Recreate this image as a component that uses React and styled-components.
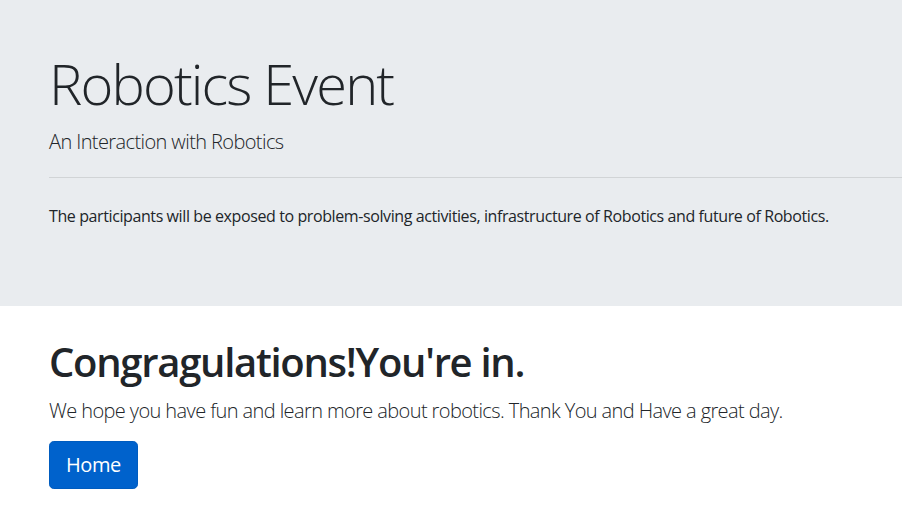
import React from "react";
import styled, { createGlobalStyle } from "styled-components";

const GlobalStyle = createGlobalStyle`
  body {
    margin: 0;
    font-family: "Open Sans", "Liberation Sans", sans-serif;
    color: #212529;
    background: #fff;
  }
`;

export default function App() {
  return (
    <>
      <GlobalStyle />
      <Jumbotron>
        <Display>Robotics Event</Display>
        <Lead $after={0}>An Interaction with Robotics</Lead>
        <Rule />
        <Text>
          The participants will be exposed to problem-solving activities,
          infrastructure of Robotics and future of Robotics.
        </Text>
      </Jumbotron>
      <Section>
        <Heading>Congragulations!You're in.</Heading>
        <Lead $after={15}>
          We hope you have fun and learn more about robotics. Thank You and
          Have a great day.
        </Lead>
        <HomeButton>Home</HomeButton>
      </Section>
    </>
  );
}

const Jumbotron = styled.div`
  background-color: #e9ecef;
  padding: 50px 0 62px 49px;
  margin-bottom: 32px;
`;

const Display = styled.h1`
  margin: 0 0 10px;
  font-size: 56px;
  font-weight: 300;
  line-height: 1.2;
  letter-spacing: -0.033em;
`;

const Lead = styled.p`
  margin: 0 0 ${(p) => p.$after}px;
  font-size: 20px;
  font-weight: 300;
  line-height: 1.5;
  letter-spacing: -0.03em;
`;

const Rule = styled.hr`
  margin: 20px 0 26px;
  border: 0;
  border-top: 1px solid rgba(0, 0, 0, 0.1);
`;

const Text = styled.p`
  margin: 0 0 16px;
  font-size: 16px;
  line-height: 1.5;
  letter-spacing: -0.025em;
`;

const Section = styled.div`
  padding: 0 49px;
`;

const Heading = styled.h1`
  margin: 0 0 10px;
  font-size: 40px;
  font-weight: 600;
  line-height: 1.2;
  letter-spacing: -0.032em;
`;

const HomeButton = styled.button`
  display: inline-block;
  padding: 8px 16px;
  font-family: inherit;
  font-size: 20px;
  line-height: 1.5;
  letter-spacing: -0.02em;
  color: #fff;
  background-color: #0062cc;
  border: 1px solid #005cbf;
  border-radius: 4.8px;
  cursor: pointer;
`;
